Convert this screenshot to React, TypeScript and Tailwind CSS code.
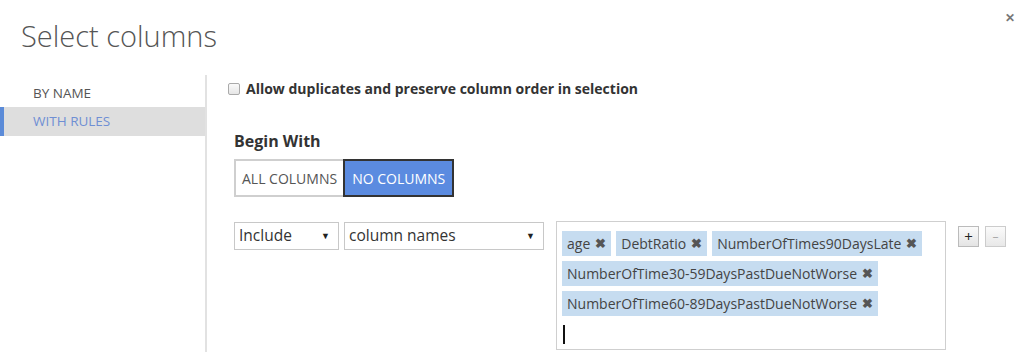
const font = { fontFamily: '"Open Sans", "Noto Sans", sans-serif' };

function Tag({ label }: { label: string }) {
  return (
    <span className="flex h-[25px] items-center gap-[5px] bg-[#c6dcf0] px-[5px] text-[14px] text-[#444]">
      {label}
      <span className="text-[13px] font-bold text-[#555]">✖</span>
    </span>
  );
}

function FakeSelect({ label, width }: { label: string; width: string }) {
  return (
    <div
      className={`flex h-[28px] items-center justify-between border border-[#c8c8c8] bg-white pl-[4px] pr-[8px] text-[15.5px] text-[#333] ${width}`}
    >
      <span>{label}</span>
      <span className="text-[9px] text-[#222]">▼</span>
    </div>
  );
}

export default function App() {
  return (
    <div className="relative h-[352px] w-[1024px] overflow-hidden bg-white" style={font}>
      {/* Close */}
      <span className="absolute right-[9px] top-[9px] text-[12px] font-bold text-[#777]">✕</span>

      <h1 className="pl-[21px] pt-[16px] text-[29px] font-light leading-[40px] text-[#555]">
        Select columns
      </h1>

      <div className="mt-[19px] flex">
        {/* Left nav */}
        <nav className="w-[205px] pt-[4px]">
          <div className="flex h-[28px] items-center pl-[33px] text-[13.5px] text-[#555]">BY NAME</div>
          <div className="flex h-[29px] items-center border-l-[4px] border-[#5b8bd8] bg-[#dedede] pl-[29px] text-[13.5px] text-[#6f8fd4]">
            WITH RULES
          </div>
        </nav>

        <div className="h-[300px] w-[2px] bg-[#e2e2e2]" />

        {/* Main */}
        <div className="flex-1 pl-[21px] pt-[3px]">
          <label className="flex items-center gap-[6px] text-[14px] font-bold text-[#333]">
            <span className="h-[12px] w-[12px] rounded-[2px] border border-[#aaa] bg-gradient-to-b from-[#fafafa] to-[#e6e6e6]" />
            Allow duplicates and preserve column order in selection
          </label>

          <h2 className="mt-[30px] pl-[6px] text-[16px] font-bold text-[#333]">Begin With</h2>

          <div className="ml-[6px] mt-[6px] flex h-[38px] text-[14px]">
            <button className="border-2 border-r-0 border-[#cfcfcf] px-[6px] text-[#555]">ALL COLUMNS</button>
            <button className="border-2 border-[#333] bg-[#5b8be0] px-[7px] text-white">NO COLUMNS</button>
          </div>

          <div className="mt-[24px] flex items-start">
            <div className="ml-[6px] flex gap-[5px] pt-[1px]">
              <FakeSelect label="Include" width="w-[105px]" />
              <FakeSelect label="column names" width="w-[200px]" />
            </div>

            <div className="ml-[12px] h-[129px] w-[390px] border border-[#cfcfcf] px-[5px] pt-[9px]">
              <div className="flex flex-wrap gap-x-[5px] gap-y-[5px]">
                <Tag label="age" />
                <Tag label="DebtRatio" />
                <Tag label="NumberOfTimes90DaysLate" />
                <Tag label="NumberOfTime30-59DaysPastDueNotWorse" />
                <Tag label="NumberOfTime60-89DaysPastDueNotWorse" />
              </div>
              <div className="ml-[1px] mt-[9px] h-[19px] w-[2px] bg-[#111]" />
            </div>

            <div className="ml-[12px] mt-[5px] flex gap-[6px]">
              <button className="flex h-[21px] w-[21px] items-center justify-center border border-[#bbb] bg-gradient-to-b from-[#fbfbfb] to-[#e4e4e4] text-[15px] leading-none text-[#222]">
                +
              </button>
              <button className="flex h-[21px] w-[21px] items-center justify-center border border-[#ccc] bg-gradient-to-b from-[#fbfbfb] to-[#e8e8e8] text-[12px] leading-none text-[#aaa]">
                –
              </button>
            </div>
          </div>
        </div>
      </div>
    </div>
  );
}
